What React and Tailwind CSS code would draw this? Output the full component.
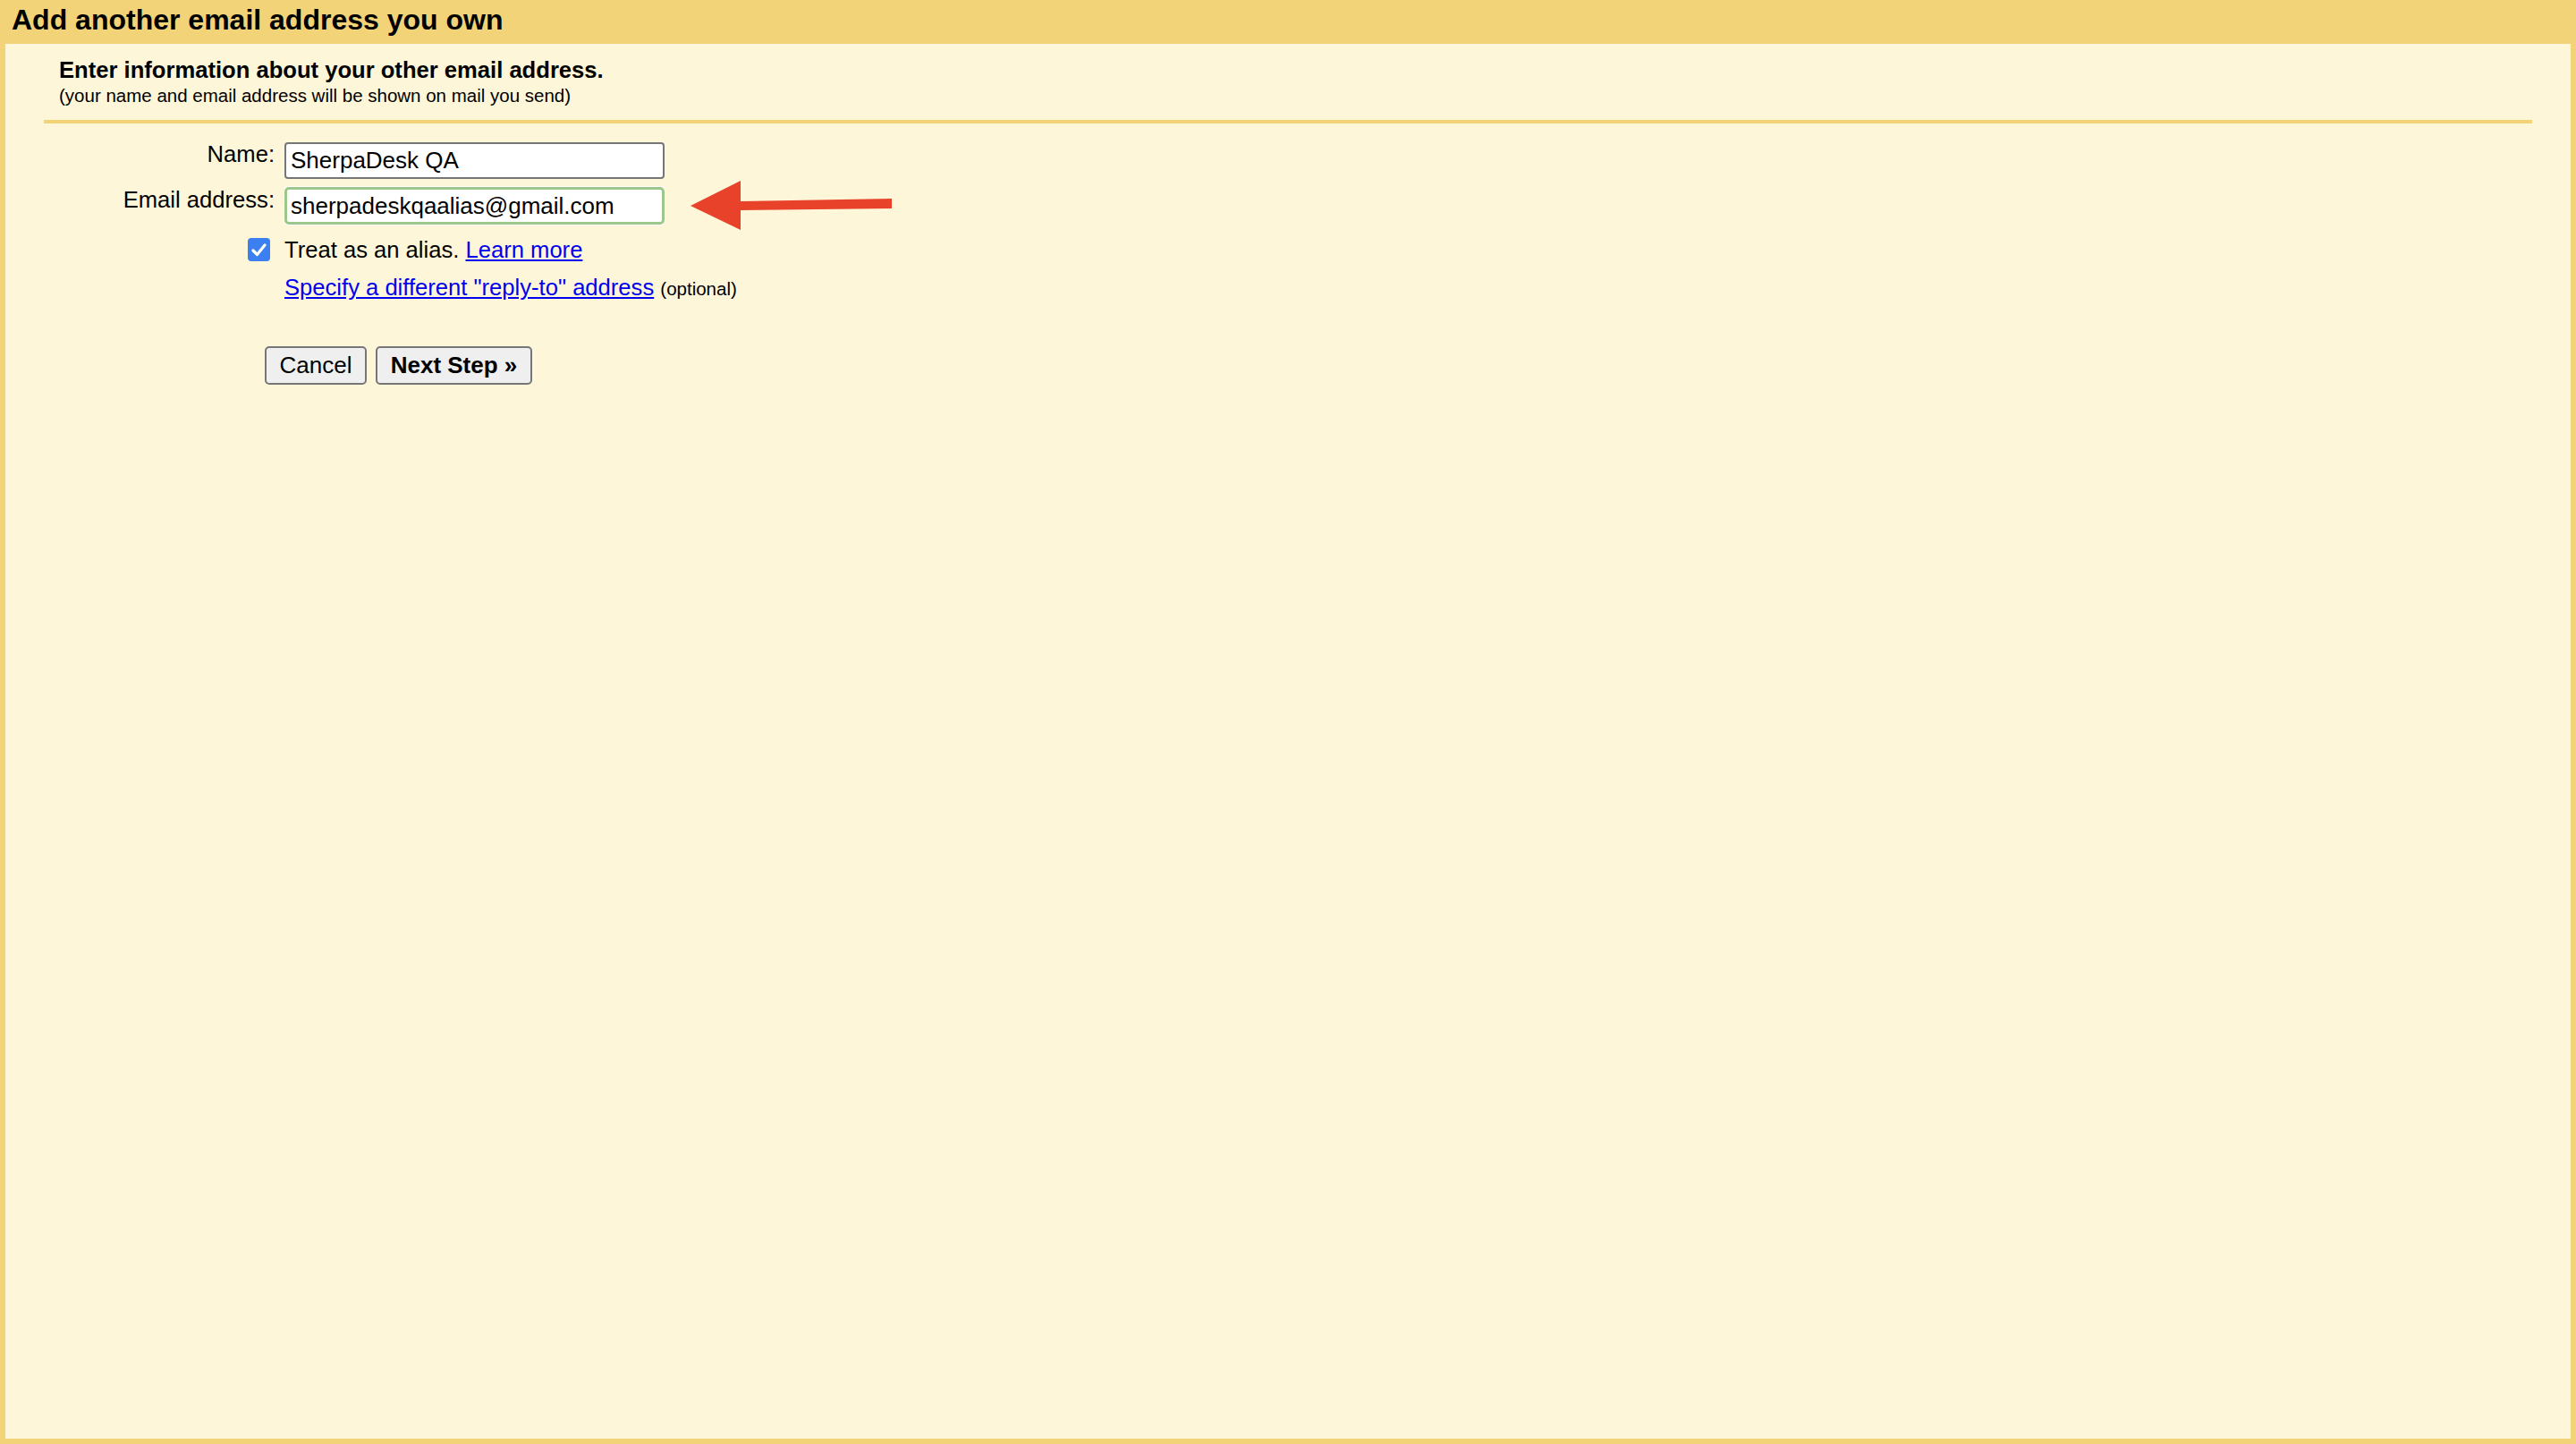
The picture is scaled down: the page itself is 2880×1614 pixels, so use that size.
import React from 'react';

export default function App() {
  return (
    <div
      className="relative h-screen w-full flex flex-col bg-[#f3d377] text-black overflow-hidden"
      style={{ fontFamily: '"Liberation Sans", Arial, sans-serif' }}
    >
      <div className="h-[49px] shrink-0 pl-[13px] pt-[4px] text-[32px] leading-[36px] font-bold">
        Add another email address you own
      </div>

      <div className="flex-1 mx-[6px] mb-[6px] bg-[#fef6d9] pt-[14px]">
        <div className="pl-[60px]">
          <div className="text-[25.6px] leading-[30px] font-bold">Enter information about your other email address.</div>
          <div className="mt-[2px] text-[20.5px] leading-[24px]">(your name and email address will be shown on mail you send)</div>
        </div>
        <div className="mx-[43px] mt-[15px] h-[4px] bg-[#f3d377]" />

        <div className="mt-[21px] text-[25.6px]">
          <div className="flex items-start">
            <div className="w-[301px] text-right leading-[26px]">Name:</div>
            <input
              readOnly
              value="SherpaDesk QA"
              className="ml-[11px] w-[425px] h-[41px] px-[5px] bg-white border-2 border-[#767676] rounded-[4px] text-[26px] outline-none"
            />
          </div>
          <div className="flex items-start mt-[9px]">
            <div className="w-[301px] text-right leading-[26px] pt-[1px]">Email address:</div>
            <input
              readOnly
              value="sherpadeskqaalias@gmail.com"
              className="ml-[11px] w-[425px] h-[42px] px-[4px] bg-white border-[3px] border-[#9cc78a] rounded-[5px] shadow-[0_0_0_1px_#ffffff] text-[26px] outline-none"
            />
          </div>

          <div className="flex items-start mt-[13px] leading-[30px]">
            <div className="w-[296px] flex justify-end pt-[2px]">
              <div className="w-[25px] h-[26px] rounded-[4px] bg-[#3c7ff1] flex items-center justify-center">
                <svg width="17" height="15" viewBox="0 0 17 15">
                  <path d="M2 8 L6.5 12.5 L15 2" fill="none" stroke="#ffffff" strokeWidth="3.2" strokeLinecap="round" strokeLinejoin="round" />
                </svg>
              </div>
            </div>
            <div className="ml-[16px]">
              Treat as an alias.{' '}
              <a href="#" className="text-[#0000ee] underline">Learn more</a>
            </div>
          </div>

          <div className="flex mt-[12px] leading-[30px]">
            <div className="ml-[312px]">
              <a href="#" className="text-[#0000ee] underline">Specify a different "reply-to" address</a>{' '}
              <span className="text-[20.5px]">(optional)</span>
            </div>
          </div>

          <div className="flex gap-[10px] ml-[290px] mt-[49px]">
            <button className="w-[114px] h-[43px] flex items-center justify-center bg-[#efefef] border-2 border-[#767676] rounded-[5px] text-[26px]">
              Cancel
            </button>
            <button className="w-[175px] h-[43px] flex items-center justify-center bg-[#efefef] border-2 border-[#767676] rounded-[5px] text-[26px] font-bold">
              Next Step »
            </button>
          </div>
        </div>
      </div>

      <svg className="absolute left-[765px] top-[195px]" width="240" height="70" viewBox="0 0 240 70">
        <polygon points="7,35 63,7 63,30 232,27 232,38 63,40 63,62" fill="#e8432a" />
      </svg>
    </div>
  );
}
